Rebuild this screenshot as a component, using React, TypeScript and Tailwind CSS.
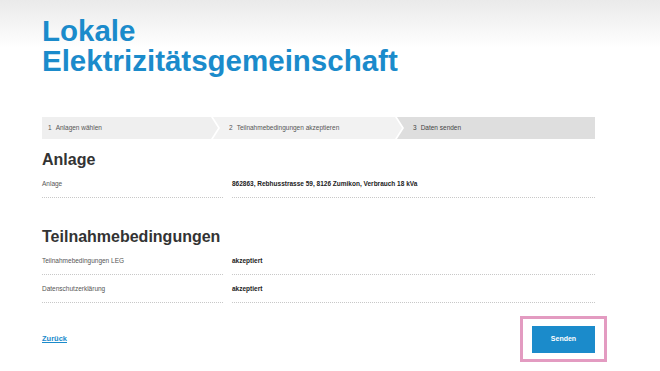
import React from "react";

const font = { fontFamily: '"Liberation Sans", Arial, sans-serif' };

function Row({ label, value }: { label: string; value: string }) {
  return (
    <div className="grid grid-cols-[181px_1fr] gap-x-[9px]">
      <div className="border-b border-dotted border-[#c8c8c8] pt-[9px] pb-[8px] text-[6.5px] leading-[10px] text-[#555]">
        {label}
      </div>
      <div className="border-b border-dotted border-[#c8c8c8] pt-[9px] pb-[8px] text-[6.5px] leading-[10px] font-bold text-[#222]">
        {value}
      </div>
    </div>
  );
}

export default function App() {
  return (
    <div
      className="w-[660px] h-[371px] overflow-hidden bg-[linear-gradient(to_bottom,#eaeaea_0px,#ffffff_48px)]"
      style={font}
    >
      <div className="pl-[42px] pr-[65px] pt-[16px]">
        <h1 className="text-[29.5px] leading-[29.5px] font-bold text-[#1b8bcb]">
          <div>Lokale</div>
          <div>Elektrizitätsgemeinschaft</div>
        </h1>

        <div className="mt-[42px] flex h-[22px] text-[6.5px] text-[#555]">
          <div className="w-[176px] flex items-center pl-[6px] bg-[#efefef] [clip-path:polygon(0_0,calc(100%_-_7px)_0,100%_50%,calc(100%_-_7px)_100%,0_100%)]">
            <span className="mr-[4px]">1</span>Anlagen wählen
          </div>
          <div className="ml-[-5px] w-[189px] flex items-center pl-[16px] bg-[#f2f2f2] [clip-path:polygon(0_0,calc(100%_-_7px)_0,100%_50%,calc(100%_-_7px)_100%,0_100%,7px_50%)]">
            <span className="mr-[4px]">2</span>Teilnahmebedingungen akzeptieren
          </div>
          <div className="ml-[-5px] flex-1 flex items-center pl-[16px] bg-[#dedede] text-[#444] [clip-path:polygon(0_0,100%_0,100%_100%,0_100%,7px_50%)]">
            <span className="mr-[4px]">3</span>Daten senden
          </div>
        </div>

        <h2 className="mt-[11px] text-[16px] leading-[20px] font-bold text-[#333]">Anlage</h2>
        <Row label="Anlage" value="862863, Rebhusstrasse 59, 8126 Zumikon, Verbrauch 18 kVa" />

        <h2 className="mt-[29px] text-[16px] leading-[20px] font-bold text-[#333]">Teilnahmebedingungen</h2>
        <Row label="Teilnahmebedingungen LEG" value="akzeptiert" />
        <Row label="Datenschutzerklärung" value="akzeptiert" />

        <div className="mt-[21px] flex items-center justify-between">
          <a className="text-[7.5px] font-bold text-[#1b8bcb] underline cursor-pointer">Zurück</a>
          <div className="relative">
            <button className="w-[63px] h-[27px] bg-[#1b8bcb] text-white text-[7px] font-bold">Senden</button>
            <span className="absolute left-[-12px] right-[-12px] top-[-8px] bottom-[-9px] border-[3px] border-[#e39bc1] pointer-events-none" />
          </div>
        </div>
      </div>
    </div>
  );
}
